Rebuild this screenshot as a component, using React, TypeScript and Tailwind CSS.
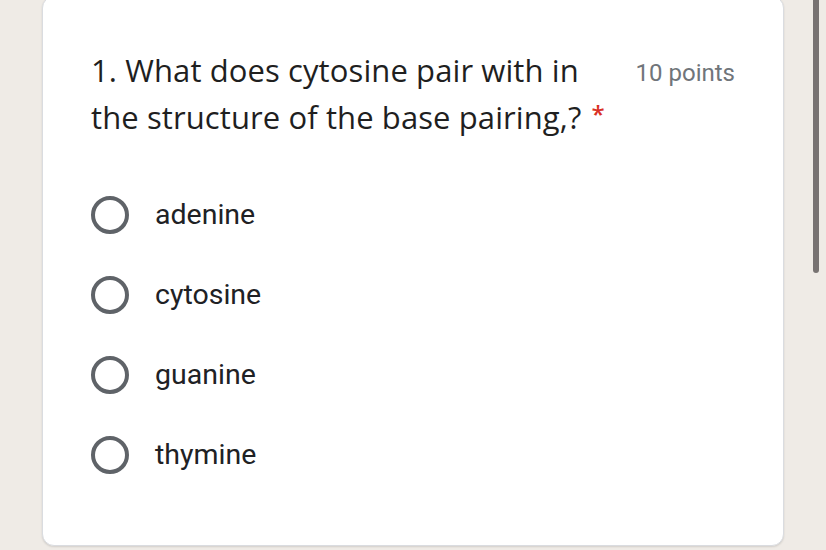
import React from "react";

const options = ["adenine", "cytosine", "guanine", "thymine"];

export default function App() {
  return (
    <div className="relative w-[826px] h-[550px] overflow-hidden bg-[#efebe6]">
      <div className="pl-[42px]">
        <div className="mt-[-4px] w-[742px] h-[550px] bg-white rounded-[12px] border border-[#dadce0] shadow-[0_1px_2px_rgba(0,0,0,0.12)] pl-[48px] pr-[48px] pt-[50px]">
          <div className="flex items-start">
            <div
              className="w-[520px] text-[31px] leading-[47px] text-[#1f1f1f] tracking-[0.1px]"
              style={{ fontFamily: '"Open Sans", sans-serif' }}
            >
              1. What does cytosine pair with in
              <br />
              the structure of the base pairing,?
              <span className="text-[#d93025] text-[24px] font-semibold align-top ml-[10px] relative top-[-4px]">*</span>
            </div>
            <div
              className="ml-auto pt-[8px] text-[24px] text-[#70757a]"
              style={{ fontFamily: "Roboto, sans-serif" }}
            >
              10 points
            </div>
          </div>
          <div className="mt-[55px] flex flex-col gap-[42px]">
            {options.map((o) => (
              <div key={o} className="flex items-center h-[38px]">
                <div className="w-[38px] h-[38px] rounded-full border-[4px] border-[#5f6368]" />
                <span
                  className="ml-[26px] text-[28.5px] text-[#202124]"
                  style={{ fontFamily: "Roboto, sans-serif" }}
                >
                  {o}
                </span>
              </div>
            ))}
          </div>
        </div>
      </div>
      <div className="absolute left-[813px] top-0 w-[6px] h-[273px] rounded-b-full bg-[#787372]" />
    </div>
  );
}
